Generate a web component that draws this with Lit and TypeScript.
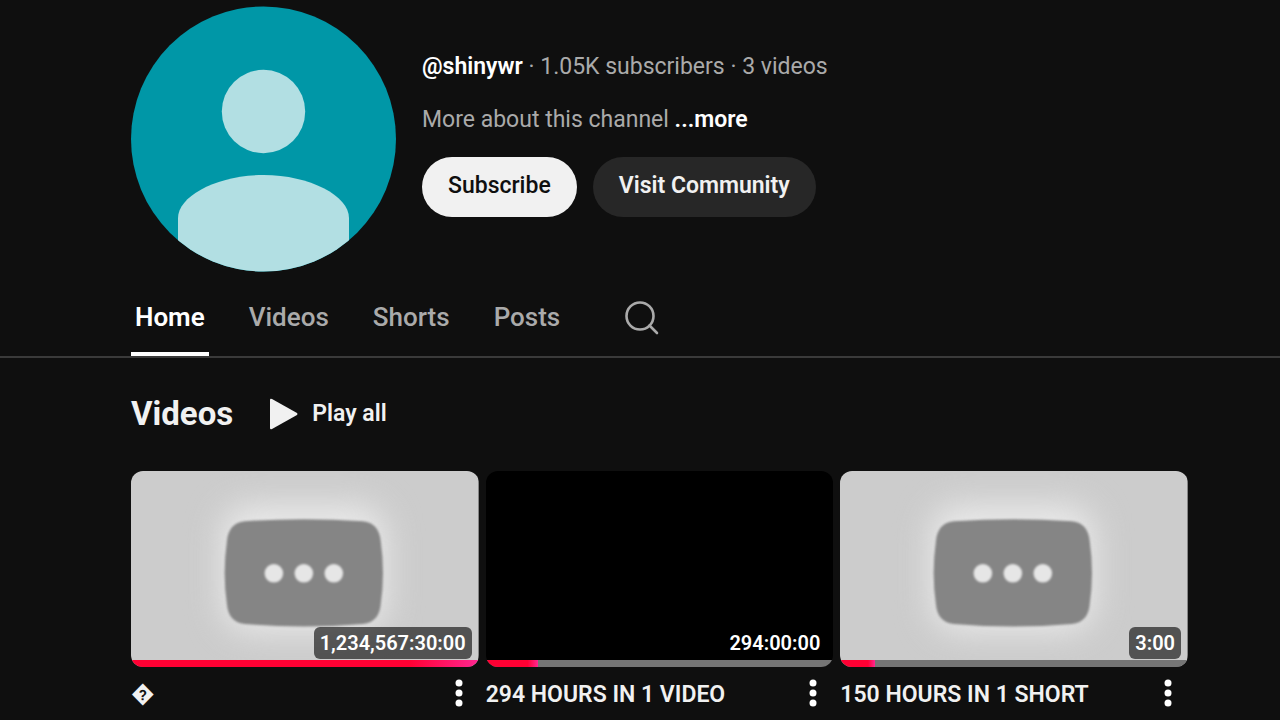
import { LitElement, html, css, nothing } from "lit";
import { customElement, property, state } from "lit/decorators.js";
import { classMap } from "lit/directives/class-map.js";

interface Video {
  title: string;
  duration: string;
  watched: number;
  placeholder: boolean;
}

const VIDEOS: Video[] = [
  { title: "\uFFFD", duration: "1,234,567:30:00", watched: 100, placeholder: true },
  { title: "294 HOURS IN 1 VIDEO", duration: "294:00:00", watched: 15, placeholder: false },
  { title: "150 HOURS IN 1 SHORT", duration: "3:00", watched: 10, placeholder: true },
];

const TABS = ["Home", "Videos", "Shorts", "Posts"];

@customElement("video-card")
export class VideoCard extends LitElement {
  @property({ attribute: false }) video!: Video;

  static styles = css`
    :host {
      display: block;
      min-width: 0;
    }
    .thumb {
      position: relative;
      display: block;
      aspect-ratio: 16 / 9;
      border-radius: 12px;
      overflow: hidden;
      background: #000;
    }
    .art {
      display: block;
      width: 100%;
      height: 100%;
    }
    .badge {
      position: absolute;
      right: 7px;
      bottom: 8px;
      padding: 0 6px;
      border-radius: 6px;
      background: rgba(0, 0, 0, 0.6);
      color: #fff;
      font-size: 20px;
      font-weight: 600;
      line-height: 32px;
    }
    .track {
      position: absolute;
      left: 0;
      right: 0;
      bottom: 0;
      height: 7px;
      background: #757575;
    }
    .bar {
      height: 100%;
      background: linear-gradient(to right, #ff0033 80%, #ff2791 100%);
    }
    .meta {
      display: flex;
      align-items: center;
      justify-content: space-between;
      padding: 12px 16px 0 0;
    }
    .title {
      margin: 0;
      font-size: 23px;
      font-weight: 600;
      line-height: 32px;
      color: #f1f1f1;
    }
    .title a {
      color: inherit;
      text-decoration: none;
    }
    .menu {
      display: block;
      border: 0;
      padding: 0 0 4px;
      background: none;
      color: #fff;
      cursor: pointer;
    }
    .menu svg {
      display: block;
    }
  `;

  private renderPlaceholder() {
    return html`
      <svg class="art" viewBox="0 0 348 195" preserveAspectRatio="none" aria-hidden="true">
        <defs>
          <filter id="glow" x="-50%" y="-50%" width="200%" height="200%" color-interpolation-filters="sRGB">
            <feGaussianBlur stdDeviation="17"></feGaussianBlur>
          </filter>
          <filter id="soft" x="-5%" y="-5%" width="110%" height="110%" color-interpolation-filters="sRGB">
            <feGaussianBlur stdDeviation="0.8"></feGaussianBlur>
          </filter>
        </defs>
        <rect width="348" height="195" fill="#cccccc"></rect>
        <rect x="92" y="35" width="162" height="124" rx="26" fill="#ebebeb" filter="url(#glow)"></rect>
        <g filter="url(#soft)">
          <path fill="#858585" d="M114 50Q173 46 232 50C244 51 249 59 250 70Q254.500 102 250 133C249 144 244 151.500 232 152.500Q173 157.500 114 152.500C102 151.500 97 144 96 133Q91.500 102 96 70C97 59 102 51 114 50Z"></path>
          <circle cx="143" cy="102" r="9.300" fill="#e6e6e6"></circle>
          <circle cx="173" cy="102" r="9.300" fill="#e6e6e6"></circle>
          <circle cx="203" cy="102" r="9.300" fill="#e6e6e6"></circle>
        </g>
      </svg>`;
  }

  render() {
    const v = this.video;
    return html`
      <a class="thumb" href="#watch" aria-label=${v.title}>
        ${v.placeholder ? this.renderPlaceholder() : nothing}
        <span class="badge">${v.duration}</span>
        <div class="track"><div class="bar" style="width: ${v.watched}%"></div></div>
      </a>
      <div class="meta">
        <h3 class="title"><a href="#watch">${v.title}</a></h3>
        <button class="menu" aria-label="Action menu">
          <svg width="8" height="28" viewBox="0 0 8 28" fill="currentColor" aria-hidden="true">
            <circle cx="4" cy="4" r="3.500"></circle>
            <circle cx="4" cy="14" r="3.500"></circle>
            <circle cx="4" cy="24" r="3.500"></circle>
          </svg>
        </button>
      </div>
    `;
  }
}

@customElement("app-root")
export class AppRoot extends LitElement {
  @state() private active = "Home";

  static styles = css`
    :host {
      display: block;
      min-height: 100vh;
      box-sizing: border-box;
      background: #0f0f0f;
      color: #f1f1f1;
      font-family: Roboto, "Liberation Sans", sans-serif;
    }
    .header {
      display: flex;
      gap: 25px;
      padding: 6px 92px 0 131px;
    }
    .avatar {
      flex: none;
      display: block;
    }
    .info {
      padding-top: 45px;
    }
    .line {
      margin: 0 0 21px;
      font-size: 23px;
      line-height: 32px;
      color: #aaa;
    }
    .strong {
      color: #fff;
      font-weight: 600;
      text-decoration: none;
    }
    .actions {
      display: flex;
      gap: 16px;
    }
    .pill {
      height: 60px;
      padding: 0 26px 2px;
      border: 0;
      border-radius: 30px;
      background: #272727;
      color: #f1f1f1;
      font: 600 23px/32px Roboto, "Liberation Sans", sans-serif;
      cursor: pointer;
    }
    .pill.primary {
      background: #f1f1f1;
      color: #0f0f0f;
      font-weight: 500;
    }
    .tabs {
      display: flex;
      gap: 36px;
      padding: 16px 92px 0 131px;
      border-bottom: 2px solid #3a3a3a;
    }
    .tab {
      height: 68px;
      padding: 0 4px 6px;
      border: 0;
      border-bottom: 4px solid transparent;
      background: none;
      color: #aaa;
      font: 500 26px/32px Roboto, "Liberation Sans", sans-serif;
      cursor: pointer;
    }
    .tab.active {
      color: #fff;
      border-bottom-color: #fff;
      font-weight: 600;
    }
    .search {
      margin-left: 24px;
      padding: 0 0 8px;
      border: 0;
      background: none;
      color: #aaa;
      cursor: pointer;
    }
    .search svg {
      display: block;
    }
    .shelf {
      padding: 36px 92px 0 131px;
    }
    .shelf-head {
      display: flex;
      align-items: center;
      gap: 36px;
      margin-bottom: 37px;
    }
    .shelf-title {
      margin: 0;
      font-size: 33px;
      font-weight: 700;
      line-height: 40px;
    }
    .play {
      display: flex;
      align-items: center;
      gap: 14px;
      color: #f1f1f1;
      font-size: 23px;
      font-weight: 600;
      line-height: 32px;
      text-decoration: none;
    }
    .grid {
      display: grid;
      grid-template-columns: repeat(3, minmax(0, 1fr));
      gap: 7px;
    }
  `;

  render() {
    return html`
      <header class="header">
        <svg class="avatar" width="266" height="266" viewBox="0 0 266 266" role="img" aria-label="Channel avatar">
          <defs>
            <clipPath id="round"><circle cx="132.500" cy="133" r="132.500"></circle></clipPath>
          </defs>
          <g clip-path="url(#round)">
            <rect width="266" height="266" fill="#0097a7"></rect>
            <g fill="#b2dfe3">
              <circle cx="132.500" cy="105.500" r="41.700"></circle>
              <path d="M47 266V212C47 190 86 169 132.500 169S218 190 218 212V266Z"></path>
            </g>
          </g>
        </svg>
        <div class="info">
          <p class="line"><span class="strong">@shinywr</span> · 1.05K subscribers · 3 videos</p>
          <p class="line">More about this channel <a class="strong" href="#about">...more</a></p>
          <div class="actions">
            <button class="pill primary">Subscribe</button>
            <button class="pill">Visit Community</button>
          </div>
        </div>
      </header>
      <nav class="tabs">
        ${TABS.map(
          (t) => html`<button
            class=${classMap({ tab: true, active: t === this.active })}
            @click=${() => (this.active = t)}
          >${t}</button>`
        )}
        <button class="search" aria-label="Search">
          <svg width="36" height="36" viewBox="0 0 36 36" fill="none" stroke="currentColor" stroke-width="2.600" stroke-linecap="round" aria-hidden="true">
            <circle cx="16" cy="16" r="13.500"></circle>
            <path d="M25.500 25.500L33 33"></path>
          </svg>
        </button>
      </nav>
      <section class="shelf">
        <div class="shelf-head">
          <h2 class="shelf-title">Videos</h2>
          <a class="play" href="#playlist">
            <svg width="29" height="32" viewBox="0 0 29 32" aria-hidden="true">
              <path fill="currentColor" d="M1 2Q1 0 3 1L28 15Q29 16 28 17L3 31Q1 32 1 30Z"></path>
            </svg>
            Play all
          </a>
        </div>
        <div class="grid">
          ${VIDEOS.map((v) => html`<video-card .video=${v}></video-card>`)}
        </div>
      </section>
    `;
  }
}
